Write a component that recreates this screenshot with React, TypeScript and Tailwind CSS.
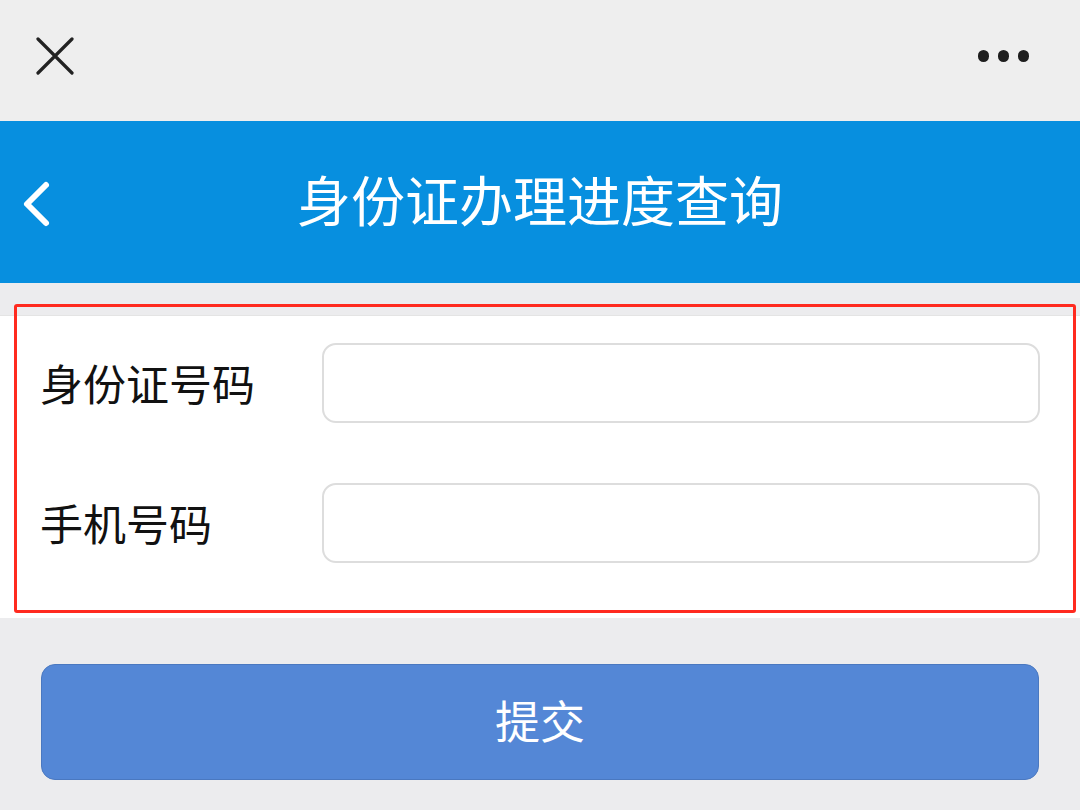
export default function App() {
  const font = { fontFamily: '"Noto Sans CJK SC", "Noto Sans", sans-serif' };

  return (
    <div className="relative w-[1080px] h-[810px] bg-[#ececee] overflow-hidden" style={font}>
      {/* Top bar */}
      <div className="h-[121px] bg-[#eeeeee] flex items-center justify-between pl-[36px] pr-[51px] pb-[10px]">
        <svg width="38" height="38" viewBox="0 0 38 38" className="text-[#222]">
          <path d="M2 2 L36 36 M36 2 L2 36" stroke="currentColor" strokeWidth="3.2" strokeLinecap="round" />
        </svg>
        <div className="flex items-center gap-[9px]">
          <span className="w-[11px] h-[12px] rounded-full bg-[#1e1e1e]" />
          <span className="w-[11px] h-[12px] rounded-full bg-[#1e1e1e]" />
          <span className="w-[11px] h-[12px] rounded-full bg-[#1e1e1e]" />
        </div>
      </div>

      {/* Blue header */}
      <div className="relative h-[162px] bg-[#078fdf] flex items-center justify-center">
        <svg
          width="30"
          height="48"
          viewBox="0 0 30 48"
          className="absolute left-[21px] top-[59px] text-white"
        >
          <path d="M25 5 L6 24 L25 43" fill="none" stroke="currentColor" strokeWidth="6" strokeLinecap="round" strokeLinejoin="round" />
        </svg>
        <h1 className="text-white text-[54px] leading-none font-normal -mt-[7px]">
          身份证办理进度查询
        </h1>
      </div>

      {/* Form section */}
      <div className="mt-[32px] bg-white h-[303px] border-t border-[#e4e4e4] flex flex-col pt-[27px] pl-[40px] pr-[40px] gap-[60px]">
        <div className="flex items-center h-[80px]">
          <label className="w-[282px] text-[43px] leading-none text-[#111] mt-[-2px]">身份证号码</label>
          <input className="flex-1 h-[80px] rounded-[14px] border-2 border-[#dddddd] bg-white outline-none" />
        </div>
        <div className="flex items-center h-[80px]">
          <label className="w-[282px] text-[43px] leading-none text-[#111] mt-[-2px]">手机号码</label>
          <input className="flex-1 h-[80px] rounded-[14px] border-2 border-[#dddddd] bg-white outline-none" />
        </div>
      </div>

      {/* Annotation box */}
      <div className="absolute left-[14px] top-[304px] w-[1062px] h-[309px] border-[3px] border-[#ff2a1f] rounded-[3px] pointer-events-none" />

      {/* Submit */}
      <div className="px-[41px] pt-[46px]">
        <button className="w-full h-[116px] rounded-[14px] bg-[#5487d6] border border-[#4a78c0] text-white text-[45px] leading-none pb-[6px]">
          提交
        </button>
      </div>
    </div>
  );
}
